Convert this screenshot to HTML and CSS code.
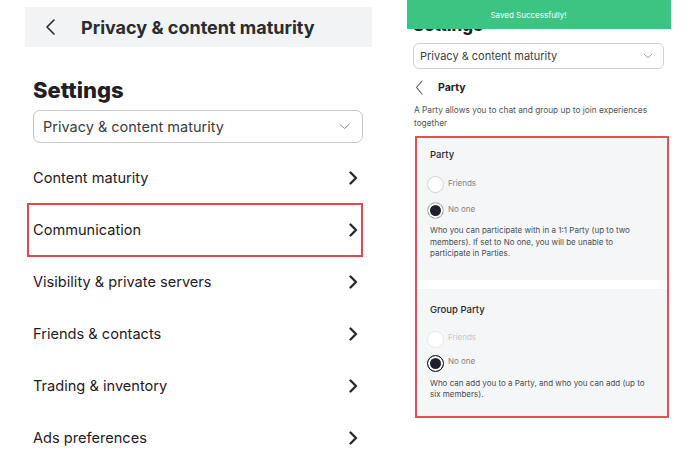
FILE: index.html
```html
<!doctype html>
<html lang="en">
  <head>
    <meta charset="utf-8" />
    <title>Privacy &amp; content maturity</title>
    <link rel="stylesheet" href="styles.css">
  </head>
  <body>
    <section class="screen screen-main">
      <header class="topbar">
        <svg class="back" width="12" height="18" viewBox="0 0 12 18"><path d="M9 2 2 9l7 7" /></svg>
        <span class="topbar-title">Privacy &amp; content maturity</span>
      </header>
      <div class="main-body">
        <h1 class="page-title">Settings</h1>
        <div class="select">
          <span>Privacy &amp; content maturity</span>
          <svg class="caret" width="11" height="7" viewBox="0 0 11 7"><path d="M1 1.5 5.5 5.5 10 1.5" /></svg>
        </div>
        <ul class="menu">
          <li class="menu-item">Content maturity <svg class="next" viewBox="0 0 10 14"><path d="M2.5 1.5 8 7l-5.5 5.5" /></svg></li>
          <li class="menu-item highlight">Communication <svg class="next" viewBox="0 0 10 14"><path d="M2.5 1.5 8 7l-5.5 5.5" /></svg></li>
          <li class="menu-item">Visibility &amp; private servers <svg class="next" viewBox="0 0 10 14"><path d="M2.5 1.5 8 7l-5.5 5.5" /></svg></li>
          <li class="menu-item">Friends &amp; contacts <svg class="next" viewBox="0 0 10 14"><path d="M2.5 1.5 8 7l-5.5 5.5" /></svg></li>
          <li class="menu-item">Trading &amp; inventory <svg class="next" viewBox="0 0 10 14"><path d="M2.5 1.5 8 7l-5.5 5.5" /></svg></li>
          <li class="menu-item">Ads preferences <svg class="next" viewBox="0 0 10 14"><path d="M2.5 1.5 8 7l-5.5 5.5" /></svg></li>
        </ul>
      </div>
    </section>

    <section class="screen screen-party">
      <div class="toast">Saved Successfully!</div>
      <h1 class="page-title small">Settings</h1>
      <div class="select small">
        <span>Privacy &amp; content maturity</span>
        <svg class="caret" width="10" height="6" viewBox="0 0 11 7"><path d="M1 1.5 5.5 5.5 10 1.5" /></svg>
      </div>
      <div class="subhead">
        <svg class="back thin" width="9" height="15" viewBox="0 0 9 15"><path d="M7 1 1.5 7.5 7 14" /></svg>
        <span>Party</span>
      </div>
      <p class="intro">A Party allows you to chat and group up to join experiences together</p>

      <div class="options">
        <div class="group">
          <div class="group-title">Party</div>
          <label class="radio"><span class="dot"></span>Friends</label>
          <label class="radio"><span class="dot checked"></span>No one</label>
          <p class="hint">Who you can participate with in a 1:1 Party (up to two members). If set to No one, you will be unable to participate in Parties.</p>
        </div>
        <div class="group">
          <div class="group-title">Group Party</div>
          <label class="radio disabled"><span class="dot"></span>Friends</label>
          <label class="radio"><span class="dot checked focus"></span>No one</label>
          <p class="hint">Who can add you to a Party, and who you can add (up to six members).</p>
        </div>
      </div>
    </section>
  </body>
</html>
```

FILE: styles.css
```css
html {
  font-family: Inter, "Noto Sans", sans-serif;
  color: #1f2024;
  background: #fff;
}

body {
  margin: 0;
  width: 700px;
  height: 450px;
  overflow: hidden;
  display: flex;
  align-items: flex-start;
}

.screen {
  position: relative;
}

/* left screen */

.screen-main {
  width: 347px;
  margin: 7px 0 0 25px;
}

.topbar {
  height: 40px;
  background: #f2f3f4;
  display: flex;
  align-items: center;
  gap: 24px;
  padding-left: 20px;
}

.back path,
.caret path,
.next path {
  fill: none;
  stroke-linecap: round;
  stroke-linejoin: round;
}

.back path {
  stroke: #2a2b2e;
  stroke-width: 1.6;
}

.topbar-title {
  font-size: 18px;
  font-weight: 700;
  color: #2b2c2f;
}

.main-body {
  padding: 0 9px 0 8px;
}

.page-title {
  margin: 29px 0 6px;
  font-size: 22px;
  line-height: 28px;
  font-weight: 800;
  color: #1f2024;
}

.select {
  height: 33px;
  box-sizing: border-box;
  border: 1px solid #c6c8cb;
  border-radius: 7px;
  display: flex;
  align-items: center;
  justify-content: space-between;
  padding: 0 12px 0 9px;
  font-size: 14.5px;
  color: #3b3d41;
}

.caret path {
  stroke: #8a8c90;
  stroke-width: 1;
}

.menu {
  list-style: none;
  margin: 9px 1px 0 -5px;
  padding: 0;
}

.menu-item {
  height: 52px;
  display: flex;
  align-items: center;
  justify-content: space-between;
  padding: 0 4px 0 5px;
  font-size: 14.6px;
  color: #1f2024;
}

.menu-item.highlight {
  outline: 2px solid #e0484e;
  outline-offset: -1px;
}

.next {
  width: 10px;
  height: 14px;
}

.next path {
  stroke: #2a2b2e;
  stroke-width: 2.4;
}

/* right screen */

.screen-party {
  width: 264px;
  margin-left: 35px;
  padding: 0 7px 0 6px;
  box-sizing: border-box;
}

.toast {
  position: absolute;
  top: 0;
  left: 0;
  right: 0;
  height: 29px;
  background: #3cc482;
  color: #fff;
  font-size: 8px;
  display: flex;
  align-items: center;
  justify-content: center;
  padding-right: 21px;
}

.page-title.small {
  margin: 15px 0 8px;
  font-size: 17px;
  line-height: 20px;
}

.select.small {
  height: 26px;
  border-radius: 6px;
  font-size: 11px;
  padding: 0 10px 0 6px;
  border-color: #cfd1d4;
}

.subhead {
  display: flex;
  align-items: center;
  gap: 14px;
  height: 22px;
  margin: 7px 0 0 2px;
  font-size: 10.5px;
  font-weight: 700;
}

.back.thin path {
  stroke: #55575b;
  stroke-width: 1.1;
}

.intro {
  margin: 6px 0 0 1px;
  font-size: 8.3px;
  line-height: 13px;
  color: #515357;
}

.options {
  margin: 6px -5px 0 2px;
  border: 2px solid #e05257;
  display: flex;
  flex-direction: column;
  gap: 9px;
}

.group {
  background: #f5f6f8;
  padding: 10px 12px 20px 13px;
}

.group + .group {
  padding-top: 14px;
  padding-bottom: 15px;
}

.group-title {
  font-size: 9.5px;
  font-weight: 500;
  line-height: 14px;
  color: #26272b;
}

.radio {
  display: flex;
  align-items: center;
  gap: 4px;
  margin: 12px 0 0 -3px;
  font-size: 8px;
  color: #818387;
  height: 17px;
}

.radio + .radio {
  margin-top: 9px;
}

.group + .group .radio + .radio {
  margin-top: 7px;
}

.radio.disabled {
  color: #c6c8cb;
}

.dot {
  width: 17px;
  height: 17px;
  box-sizing: border-box;
  border: 1px solid #cfd1d4;
  border-radius: 50%;
  background: #fff;
  margin-top: 4px;
}

.radio.disabled .dot {
  border-color: #e6e7e9;
}

.dot.checked {
  background: #1f2128;
  box-shadow: inset 0 0 0 2px #fff;
}

.dot.focus {
  border: 1.5px solid #1f2128;
}

.hint {
  margin: 8px 0 0;
  max-width: 223px;
  font-size: 8px;
  line-height: 11.5px;
  color: #4a4c50;
}
```
